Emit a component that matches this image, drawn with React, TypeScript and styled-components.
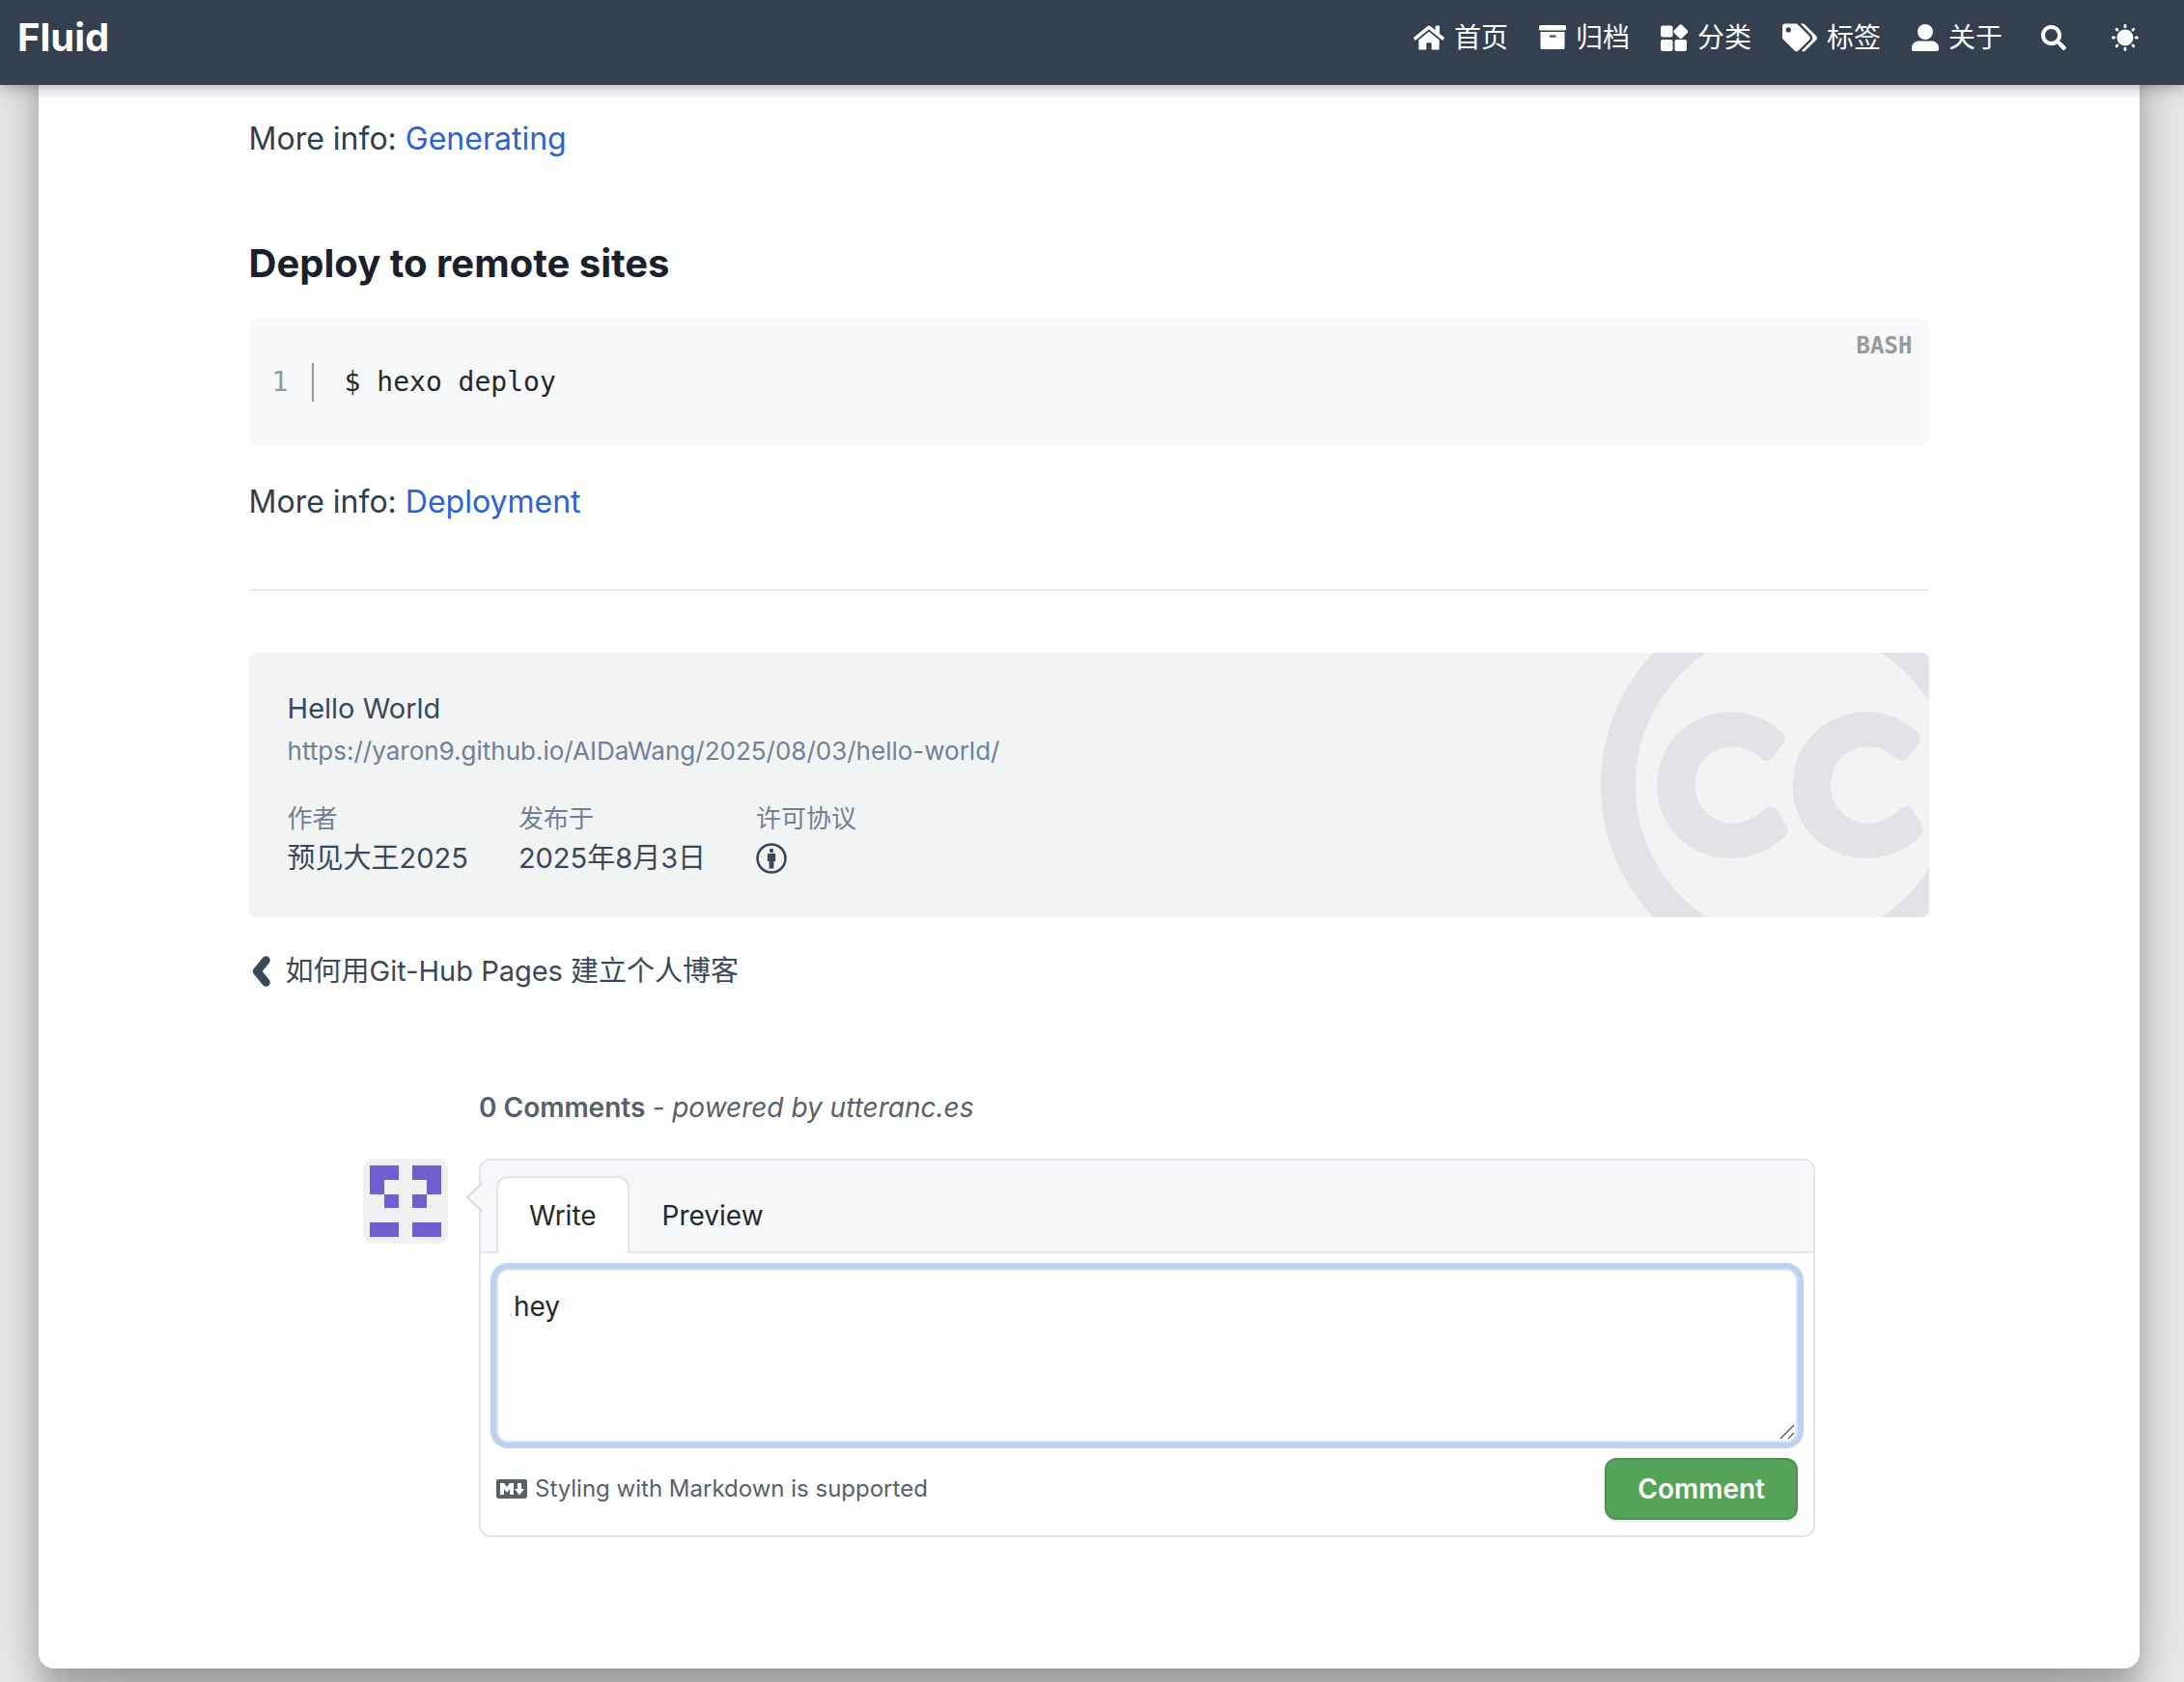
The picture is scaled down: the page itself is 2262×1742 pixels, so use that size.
import React, { useState } from "react";
import styled, { createGlobalStyle } from "styled-components";
import { FaHome, FaTags, FaSearch } from "react-icons/fa";

const sans = `Inter, "Noto Sans CJK SC", sans-serif`;
const mono = `"DejaVu Sans Mono", monospace`;

const GlobalStyle = createGlobalStyle`
  *, *::before, *::after { box-sizing: border-box; }
  html { background: #eeeeee; }
  body {
    margin: 0;
    color: #2c3e50;
    font-family: ${sans};
    font-size: 32px;
    line-height: 48px;
  }
  a { text-decoration: none; }
  svg { display: block; flex: none; }
`;

const Page = styled.div`
  display: flow-root;
  overflow: hidden;
`;

const Navbar = styled.header`
  position: relative;
  z-index: 1;
  display: flex;
  align-items: center;
  justify-content: space-between;
  height: 88px;
  padding: 0 24px 10px 18px;
  background: #344050;
  box-shadow: 0 4px 10px rgba(0, 0, 0, 0.16), 0 4px 20px rgba(0, 0, 0, 0.12);
`;

const Brand = styled.a`
  color: #ffffff;
  font-size: 40px;
  font-weight: 700;
`;

const NavRow = styled.nav`
  display: flex;
  align-items: center;
`;

const NavLink = styled.a`
  display: flex;
  align-items: center;
  gap: 10px;
  padding: 0 16px;
  color: #ffffff;
  font-size: 28px;
`;

const IconButton = styled.button`
  display: flex;
  align-items: center;
  justify-content: center;
  width: 74px;
  height: 48px;
  padding: 0;
  border: 0;
  background: none;
  color: #ffffff;
`;

const Board = styled.main`
  margin: -120px 46px 14px 40px;
  padding: 152px 0 136px;
  border-radius: 16px;
  background: #ffffff;
  box-shadow: 0 24px 30px rgba(0, 0, 0, 0.24), 0 34px 100px rgba(0, 0, 0, 0.19);
`;

const Column = styled.article`
  width: 80%;
  margin: 0 auto;
`;

const Paragraph = styled.p`
  margin: 0;
`;

const TextLink = styled.a`
  color: #2b63d3;
`;

const Heading = styled.h3`
  margin: 80px 0 32px;
  color: #1a202c;
  font-size: 40px;
  font-weight: 700;
  line-height: 50px;
`;

const CodeBlock = styled.figure`
  position: relative;
  display: flex;
  align-items: center;
  height: 132px;
  margin: 0 0 34px;
  border-radius: 8px;
  background: #f6f8fa;
  font-family: ${mono};
  font-size: 28px;
  line-height: 40px;
`;

const LineNumber = styled.span`
  width: 67px;
  padding-left: 24px;
  border-right: 2px solid #999999;
  color: #999999;
`;

const Code = styled.code`
  padding-left: 32px;
  color: #24292e;
  font-family: ${mono};
`;

const Language = styled.span`
  position: absolute;
  top: 8px;
  right: 18px;
  color: #999999;
  font-size: 24px;
  font-weight: 700;
`;

const Divider = styled.hr`
  height: 2px;
  margin: 66px 0 64px;
  border: 0;
  background: #eaecef;
`;

const License = styled.section`
  position: relative;
  overflow: hidden;
  display: flex;
  flex-direction: column;
  margin-bottom: 34px;
  padding: 36px 40px 40px;
  border-radius: 8px;
  background: #f2f4f4;
`;

const LicenseMark = styled.svg`
  position: absolute;
  top: 50%;
  right: -60px;
  width: 400px;
  height: 400px;
  margin-top: -200px;
  color: #e1e3e6;
`;

const LicenseTitle = styled.div`
  color: #3c4858;
  font-size: 29px;
  line-height: 44px;
`;

const LicenseUrl = styled.a`
  color: #718096;
  font-size: 26px;
  line-height: 44px;
`;

const Meta = styled.dl`
  display: flex;
  gap: 52px;
  margin: 28px 0 0;
`;

const MetaItem = styled.div`
  display: flex;
  flex-direction: column;
`;

const MetaLabel = styled.dt`
  color: #718096;
  font-size: 26px;
  line-height: 40px;
`;

const MetaValue = styled.dd`
  display: flex;
  align-items: center;
  height: 42px;
  margin: 0;
  color: #3c4858;
  font-size: 29px;
  line-height: 42px;
`;

const PrevLink = styled.a`
  display: flex;
  align-items: center;
  gap: 14px;
  height: 44px;
  color: #3c4858;
  font-size: 29px;
  line-height: 44px;
`;

const Comments = styled.section`
  max-width: 1504px;
  margin: 98px auto 0;
  color: #24292e;
  font-size: 28px;
  line-height: 42px;
`;

const CommentsTitle = styled.h4`
  margin: 0 0 32px 120px;
  color: #586069;
  font-size: 28px;
  font-weight: 600;
  line-height: 42px;

  em { font-weight: 400; }
`;

const CommentRow = styled.div`
  display: flex;
  align-items: flex-start;
  gap: 32px;
`;

const CommentForm = styled.form`
  position: relative;
  flex: 1;
  min-width: 0;
  border: 2px solid #e1e4e8;
  border-radius: 12px;
`;

const Pointer = styled.svg`
  position: absolute;
  top: 22px;
  left: -16px;
`;

const TabBar = styled.div`
  display: flex;
  align-items: flex-end;
  height: 96px;
  padding: 0 16px;
  border-radius: 10px 10px 0 0;
  background: #f6f8fa;
  box-shadow: inset 0 -2px #e1e4e8;
`;

const Tab = styled.button<{ $active: boolean }>`
  height: 80px;
  padding: 0 32px;
  border: 2px solid ${(p) => (p.$active ? "#e1e4e8" : "transparent")};
  border-bottom: 0;
  border-radius: 12px 12px 0 0;
  background: ${(p) => (p.$active ? "#ffffff" : "transparent")};
  color: #24292e;
  font-family: ${sans};
  font-size: 28px;
  font-weight: 400;
  line-height: 42px;
`;

const EditorFrame = styled.div`
  position: relative;
  margin: 16px;
`;

const Editor = styled.textarea`
  display: block;
  width: 100%;
  height: 180px;
  padding: 16px;
  border: 2px solid #e1e4e8;
  border-radius: 12px;
  outline: 0;
  background: #ffffff;
  box-shadow: 0 0 0 6px #bfd0f0;
  color: #24292e;
  font-family: ${sans};
  font-size: 28px;
  line-height: 42px;
  resize: vertical;

  &::-webkit-resizer { background: transparent; }
`;

const ResizeGrip = styled.svg`
  position: absolute;
  right: 3px;
  bottom: 3px;
  pointer-events: none;
`;

const FormFooter = styled.div`
  display: flex;
  align-items: center;
  justify-content: space-between;
  padding: 0 16px 16px;
`;

const MarkdownHint = styled.a`
  display: flex;
  align-items: center;
  gap: 8px;
  color: #586069;
  font-size: 24px;
  line-height: 36px;
`;

const SubmitButton = styled.button`
  height: 64px;
  padding: 0 32px;
  border: 2px solid #4c9250;
  border-radius: 12px;
  background: #55a358;
  box-shadow: 0 2px 0 rgba(27, 31, 35, 0.1);
  color: #ffffff;
  font-family: ${sans};
  font-size: 28px;
  font-weight: 600;
`;

const ArchiveIcon = () => (
  <svg width="28" height="28" viewBox="0 0 28 28" fill="currentColor" aria-hidden="true">
    <rect x="0" y="1" width="28" height="5.500" rx="1.500" />
    <path fillRule="evenodd" d="M1.500 8h25v16.500a1.500 1.500 0 0 1-1.500 1.500H3a1.500 1.500 0 0 1-1.500-1.500zM11 11.500v2h6.500v-2z" />
  </svg>
);

const CategoryIcon = () => (
  <svg width="28" height="28" viewBox="0 0 28 28" fill="currentColor" aria-hidden="true">
    <rect x="0" y="1.500" width="12.500" height="12" rx="2" />
    <rect x="0" y="16" width="12.500" height="12" rx="2" />
    <rect x="14.500" y="16" width="12.500" height="12" rx="2" />
    <rect x="15" y="2" width="11.500" height="11.500" rx="2" transform="rotate(45 20.750 7.750)" />
  </svg>
);

const UserIcon = () => (
  <svg width="28" height="28" viewBox="0 0 28 28" fill="currentColor" aria-hidden="true">
    <circle cx="14" cy="8" r="8" />
    <path d="M7 17.500h14a7 7 0 0 1 7 7V26a2 2 0 0 1-2 2H2a2 2 0 0 1-2-2v-1.500a7 7 0 0 1 7-7z" />
  </svg>
);

const SunIcon = () => (
  <svg width="28" height="28" viewBox="0 0 28 28" aria-hidden="true">
    <circle cx="14" cy="14" r="8.500" fill="currentColor" />
    <path
      d="M14 1.500v1.200M14 25.300v1.200M1.500 14h1.200M25.300 14h1.200M5.200 5.200l.8.8M22 22l.8.8M5.200 22.800l.8-.8M22 6l.8-.8"
      stroke="currentColor"
      strokeWidth="2.900"
      strokeLinecap="round"
    />
  </svg>
);

const AttributionIcon = () => (
  <svg width="32" height="32" viewBox="0 0 32 32" fill="currentColor" aria-hidden="true">
    <circle cx="16" cy="16" r="14.500" fill="none" stroke="currentColor" strokeWidth="2.600" />
    <circle cx="16" cy="8" r="2.200" />
    <path d="M12.800 11h6.400a1 1 0 0 1 1 1v7h-1.800v7.500h-4.800V19h-1.800v-7a1 1 0 0 1 1-1z" />
  </svg>
);

const ChevronIcon = () => (
  <svg width="24" height="34" viewBox="0 0 24 34" fill="none" aria-hidden="true">
    <path d="M17.500 5.500L8.200 17L17.500 28.500" stroke="currentColor" strokeWidth="8.500" strokeLinecap="round" strokeLinejoin="round" />
  </svg>
);

const MarkdownIcon = () => (
  <svg width="32" height="20" viewBox="0 0 16 10" aria-hidden="true">
    <rect width="16" height="10" rx="1.200" fill="currentColor" />
    <path d="M2 8V2h2l1.500 2L7 2h2v6H7V5L5.500 6.900L4 5v3zM11 2h2v3h1.500L12 8.200L9.500 5H11z" fill="#ffffff" />
  </svg>
);

const avatarCells = [[0, 0], [1, 0], [3, 0], [4, 0], [0, 1], [4, 1], [1, 2], [3, 2], [0, 4], [1, 4], [3, 4], [4, 4]];

const Avatar = () => (
  <svg width="88" height="88" viewBox="0 0 420 420" role="img" aria-label="avatar">
    <rect width="420" height="420" rx="56" fill="#f0f0f0" />
    {avatarCells.map(([x, y]) => (
      <rect key={`${x}-${y}`} x={35 + x * 70} y={35 + y * 70} width="70" height="70" fill="#705dd0" shapeRendering="crispEdges" />
    ))}
  </svg>
);

const ringSegment =
  "M458 1015C510 1015 552 1036 585 1066Q596 1077 588 1090L560 1128Q549 1142 535 1132C512 1112 490 1101 460 1101C408 1101 370 1142 370 1195C370 1248 410 1289 462 1289C494 1289 520 1272 542 1253Q560 1240 572 1256L596 1300Q601 1311 592 1320C560 1350 515 1375 458 1375C354 1375 276 1296 276 1195C276 1095 356 1015 458 1015Z";

const CreativeCommonsMark = () => (
  <LicenseMark viewBox="138 720.5 949 949" fill="currentColor" aria-hidden="true">
    <circle cx="612.500" cy="1195" r="432" fill="none" stroke="currentColor" strokeWidth="85" />
    <path d={ringSegment} />
    <path d={ringSegment} transform="translate(333 0)" />
  </LicenseMark>
);

const navItems = [
  { label: "首页", icon: <FaHome size={32} /> },
  { label: "归档", icon: <ArchiveIcon /> },
  { label: "分类", icon: <CategoryIcon /> },
  { label: "标签", icon: <FaTags size={36} /> },
  { label: "关于", icon: <UserIcon /> },
];

export default function App() {
  const [tab, setTab] = useState("Write");
  const [comment, setComment] = useState("hey");

  return (
    <Page>
      <GlobalStyle />
      <Navbar>
        <Brand href="#">Fluid</Brand>
        <NavRow>
          {navItems.map((item) => (
            <NavLink key={item.label} href="#">
              {item.icon}
              {item.label}
            </NavLink>
          ))}
          <IconButton type="button" aria-label="Search">
            <FaSearch size={26} />
          </IconButton>
          <IconButton type="button" aria-label="Color theme">
            <SunIcon />
          </IconButton>
        </NavRow>
      </Navbar>
      <Board>
        <Column>
          <Paragraph>
            More info: <TextLink href="#">Generating</TextLink>
          </Paragraph>
          <Heading>Deploy to remote sites</Heading>
          <CodeBlock>
            <LineNumber>1</LineNumber>
            <Code>$ hexo deploy</Code>
            <Language>BASH</Language>
          </CodeBlock>
          <Paragraph>
            More info: <TextLink href="#">Deployment</TextLink>
          </Paragraph>
          <Divider />
          <License>
            <CreativeCommonsMark />
            <LicenseTitle>Hello World</LicenseTitle>
            <LicenseUrl href="#">https://yaron9.github.io/AIDaWang/2025/08/03/hello-world/</LicenseUrl>
            <Meta>
              <MetaItem>
                <MetaLabel>作者</MetaLabel>
                <MetaValue>预见大王2025</MetaValue>
              </MetaItem>
              <MetaItem>
                <MetaLabel>发布于</MetaLabel>
                <MetaValue>2025年8月3日</MetaValue>
              </MetaItem>
              <MetaItem>
                <MetaLabel>许可协议</MetaLabel>
                <MetaValue>
                  <AttributionIcon />
                </MetaValue>
              </MetaItem>
            </Meta>
          </License>
          <PrevLink href="#">
            <ChevronIcon />
            如何用Git-Hub Pages 建立个人博客
          </PrevLink>
          <Comments>
            <CommentsTitle>
              0 Comments <em>- powered by utteranc.es</em>
            </CommentsTitle>
            <CommentRow>
              <Avatar />
              <CommentForm onSubmit={(e) => e.preventDefault()}>
                <Pointer width="18" height="32" viewBox="0 0 18 32" aria-hidden="true">
                  <path d="M18 1L2 16L18 31" fill="#f6f8fa" stroke="#d9dce0" strokeWidth="2" />
                </Pointer>
                <TabBar>
                  {["Write", "Preview"].map((name) => (
                    <Tab key={name} type="button" $active={tab === name} onClick={() => setTab(name)}>
                      {name}
                    </Tab>
                  ))}
                </TabBar>
                <EditorFrame>
                  <Editor aria-label="comment" value={comment} onChange={(e) => setComment(e.target.value)} />
                  <ResizeGrip width="16" height="16" viewBox="0 0 16 16" aria-hidden="true">
                    <path d="M1 15L15 1M9 15L15 9" stroke="#666666" strokeWidth="1.500" />
                  </ResizeGrip>
                </EditorFrame>
                <FormFooter>
                  <MarkdownHint href="#">
                    <MarkdownIcon />
                    Styling with Markdown is supported
                  </MarkdownHint>
                  <SubmitButton type="submit">Comment</SubmitButton>
                </FormFooter>
              </CommentForm>
            </CommentRow>
          </Comments>
        </Column>
      </Board>
    </Page>
  );
}
